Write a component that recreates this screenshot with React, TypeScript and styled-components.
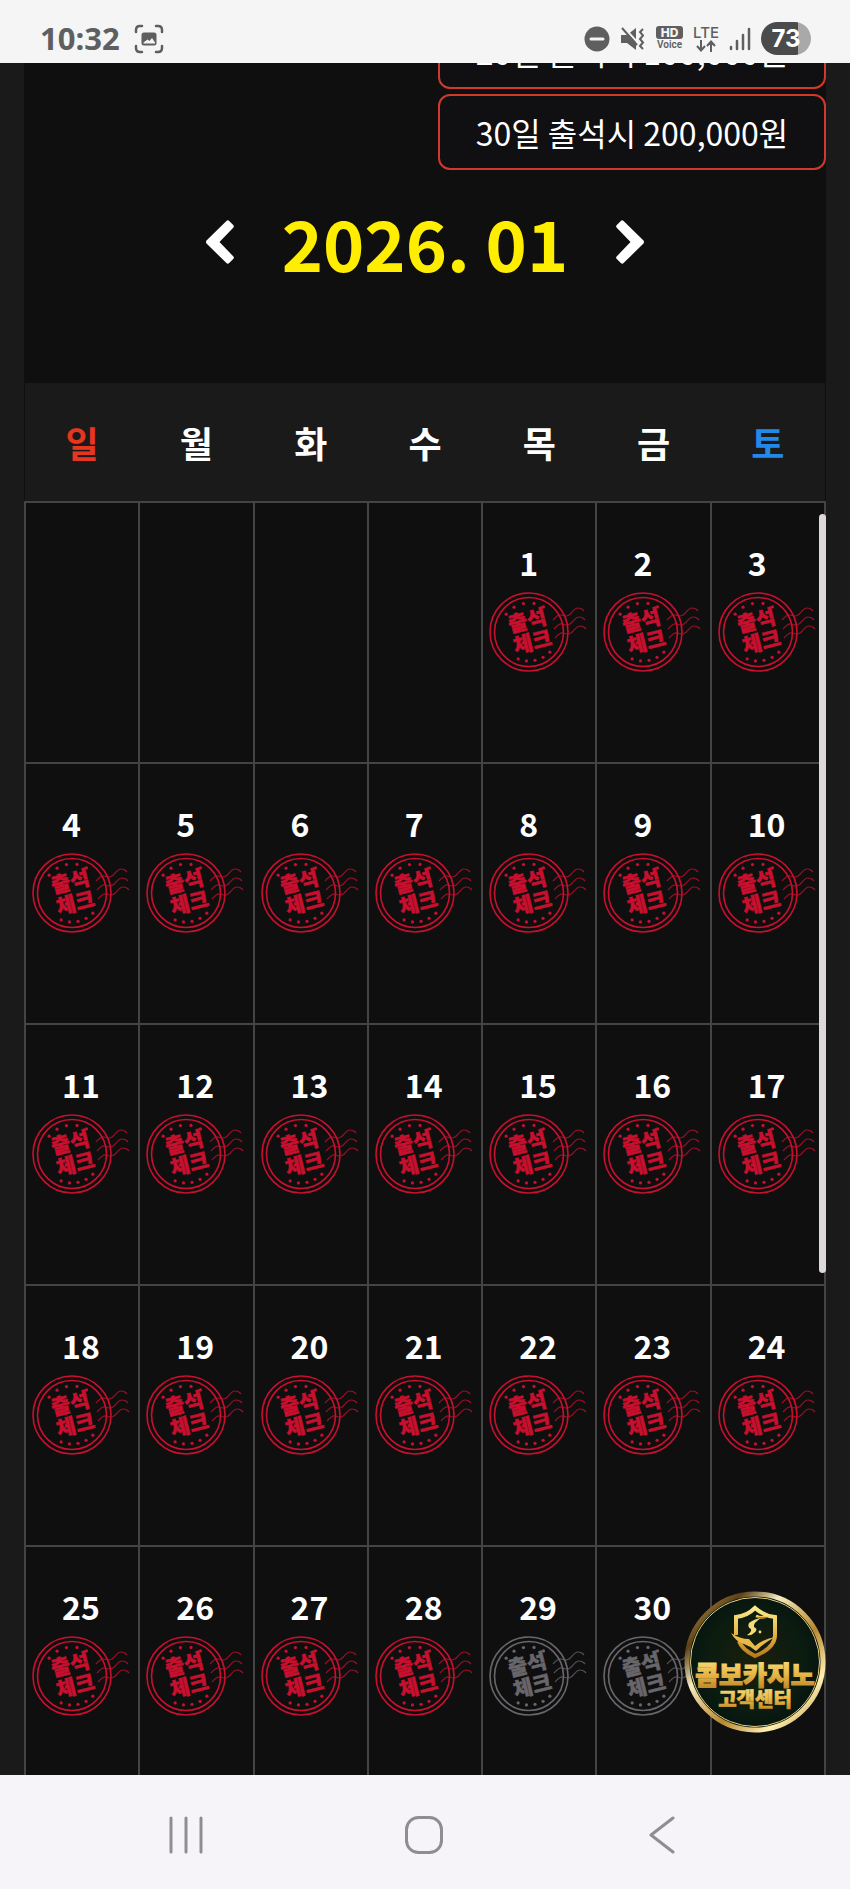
import React from "react";
import styled, { createGlobalStyle } from "styled-components";

const GlobalStyle = createGlobalStyle`
  *, *::before, *::after { box-sizing: border-box; }
  html, body { margin: 0; background: #1b1a1b; }
  body { font-family: "Noto Sans CJK KR", "Noto Sans", sans-serif; }
  button { border: 0; padding: 0; background: none; color: inherit; font: inherit; cursor: pointer; }
`;

const Phone = styled.div`
  display: flex;
  flex-direction: column;
  height: 100vh;
  overflow: hidden;
`;

const StatusBar = styled.header`
  position: relative;
  z-index: 2;
  flex: none;
  display: flex;
  align-items: center;
  justify-content: space-between;
  height: 63px;
  padding: 14px 39px 0 40px;
  background: #f5f5f5;
  color: #5f5f5f;
`;

const StatusGroup = styled.div<{ $gap: number }>`
  display: flex;
  align-items: center;
  gap: ${(p) => p.$gap}px;
`;

const Clock = styled.time`
  padding-bottom: 2px;
  font: 700 31px/32px "Open Sans", "Noto Sans", sans-serif;
`;

const StackedLabel = styled.span`
  display: flex;
  flex-direction: column;
  align-items: center;
  font: 600 10px/12px Roboto, sans-serif;
`;

const HdTag = styled.span`
  width: 27px;
  border-radius: 3px;
  background: #5f5f5f;
  color: #f5f5f5;
  font: 800 12px/13px Inter, sans-serif;
  text-align: center;
`;

const LteText = styled.span`
  font: 500 15px/14px Inter, sans-serif;
`;

const Battery = styled.span`
  width: 50px;
  height: 33px;
  border-radius: 17px;
  background: linear-gradient(90deg, #4b4b4b 73%, #a9a9a9 73%);
  color: #fff;
  font: 700 24px/33px Inter, sans-serif;
  text-align: center;
`;

const Screen = styled.main`
  position: relative;
  flex: 1;
  min-height: 0;
  overflow: hidden;
  padding: 0 24px;
`;

const Sheet = styled.div`
  min-height: 100%;
  background: #100f10;
`;

const Rewards = styled.ul`
  display: flex;
  flex-direction: column;
  align-items: flex-end;
  gap: 5px;
  margin: -50px 0 0;
  padding: 0;
  list-style: none;
`;

const Reward = styled.li`
  width: 388px;
  height: 76px;
  border: 2px solid #d03a2d;
  border-radius: 12px;
  background: #101012;
  color: #fff;
  font-size: 32px;
  line-height: 72px;
  text-align: center;
`;

const MonthNav = styled.nav`
  display: flex;
  align-items: center;
  justify-content: center;
  gap: 48px;
  height: 213px;
  padding-bottom: 70px;
`;

const MonthTitle = styled.h1`
  margin: 0;
  color: #fe0;
  font-size: 70px;
  font-weight: 700;
  line-height: 80px;
`;

const ArrowButton = styled.button`
  display: flex;
  color: #fff;
`;

const Calendar = styled.table`
  width: 100%;
  table-layout: fixed;
  border-collapse: collapse;
`;

const DayName = styled.th<{ $color: string }>`
  height: 119px;
  padding: 0;
  background: #1b1a1b;
  color: ${(p) => p.$color};
  font-size: 36px;
  font-weight: 700;
  line-height: 48px;
`;

const DayCell = styled.td`
  height: 261px;
  padding: 35px 0 0 6px;
  border: 2px solid #454445;
  color: #fff;
  vertical-align: top;
`;

const DayNumber = styled.div`
  padding-left: 30px;
  font-size: 32px;
  font-weight: 700;
  line-height: 48px;
`;

const StampArt = styled.svg<{ $missed: boolean }>`
  display: block;
  margin-top: 5px;
  color: ${(p) => (p.$missed ? "#69666b" : "#c8102e")};
`;

const ScrollThumb = styled.div`
  position: absolute;
  top: 451px;
  right: 24px;
  width: 7px;
  height: 759px;
  border-radius: 4px;
  background: #ddd8dc;
`;

const SupportButton = styled.button`
  position: absolute;
  right: 24px;
  bottom: 42px;
  width: 142px;
  height: 142px;
  border-radius: 50%;
`;

const SystemNav = styled.nav`
  flex: none;
  display: grid;
  grid-template-columns: repeat(3, 1fr);
  align-items: center;
  justify-items: center;
  height: 114px;
  padding: 6px 69px 0 67px;
  background: #f6f4f8;
  color: #8f8d92;
`;

const SystemButton = styled.button`
  display: flex;
`;

const weekdays = [
  { name: "일", color: "#e8351f" },
  { name: "월", color: "#fff" },
  { name: "화", color: "#fff" },
  { name: "수", color: "#fff" },
  { name: "목", color: "#fff" },
  { name: "금", color: "#fff" },
  { name: "토", color: "#2389e8" },
];

const FIRST_WEEKDAY = 4;
const DAYS_IN_MONTH = 31;
const LAST_ATTENDED = 28;

const weeks = Array.from({ length: 5 }, (_, w) =>
  Array.from({ length: 7 }, (_, d) => {
    const day = w * 7 + d - FIRST_WEEKDAY + 1;
    return day >= 1 && day <= DAYS_IN_MONTH ? day : null;
  })
);

const stars = [-142, -121, -101, -80, -60, 112, 95, 78, 61, 44];

const wave = "c3-3 5-6 8-5s5 2 8 0 5-7 9-7 4 1 6 3";

function Stamp({ missed }: { missed: boolean }) {
  return (
    <StampArt $missed={missed} width="98" height="82" viewBox="0 0 98 82" aria-hidden="true">
      <g fill="none" stroke="currentColor">
        <circle cx="40" cy="41" r="39" strokeWidth="1.6" />
        <circle cx="40" cy="41" r="34.5" strokeWidth="1.6" />
        <path d={`M64 29${wave}M65 38${wave}M66 47${wave}`} strokeWidth="1.2" opacity="0.75" />
      </g>
      {stars.map((a) => {
        const r = (a * Math.PI) / 180;
        return <circle key={a} cx={40 + 29 * Math.cos(r)} cy={41 + 29 * Math.sin(r)} r="1.6" fill="currentColor" />;
      })}
      <g
        transform="rotate(-14 40 41)"
        fill="currentColor"
        stroke="currentColor"
        strokeWidth="0.4"
        fontSize="21"
        fontWeight="900"
        textAnchor="middle"
      >
        <text x="41" y="37">출석</text>
        <text x="41" y="59">체크</text>
      </g>
    </StampArt>
  );
}

function Chevron({ flip }: { flip?: boolean }) {
  return (
    <svg width="28" height="44" viewBox="0 0 28 44" fill="currentColor" aria-hidden="true">
      <path
        transform={flip ? "rotate(180 14 22)" : undefined}
        d="M.5 20.600 20.400.900q1.400-1.400 2.800 0l4 4q1.400 1.400 0 2.800L13.500 22l13.700 14.300q1.400 1.400 0 2.800l-4 4q-1.400 1.400-2.800 0L.5 23.400q-1-1.400 0-2.800z"
      />
    </svg>
  );
}

function SupportLogo() {
  return (
    <svg width="142" height="142" viewBox="0 0 142 142" role="img" aria-label="콤보카지노 고객센터">
      <defs>
        <linearGradient id="ring" x1="0" y1="0" x2="1" y2="1">
          <stop offset="0" stopColor="#c9a24c" />
          <stop offset="0.2" stopColor="#5c4118" />
          <stop offset="0.35" stopColor="#f6ecc0" />
          <stop offset="0.6" stopColor="#b8862e" />
          <stop offset="0.8" stopColor="#fff0b0" />
          <stop offset="1" stopColor="#a87a28" />
        </linearGradient>
        <linearGradient id="gold" x1="0" y1="0" x2="0" y2="1">
          <stop offset="0" stopColor="#fbe98c" />
          <stop offset="0.5" stopColor="#e9b949" />
          <stop offset="1" stopColor="#b97b20" />
        </linearGradient>
        <radialGradient id="felt">
          <stop offset="0" stopColor="#1b1f0c" />
          <stop offset="0.7" stopColor="#0b1c10" />
          <stop offset="1" stopColor="#06150f" />
        </radialGradient>
      </defs>
      <circle cx="71" cy="71" r="68" fill="url(#felt)" stroke="url(#ring)" strokeWidth="5" />
      <circle cx="71" cy="71" r="64.500" fill="none" stroke="#e8cf7c" strokeWidth="1" />
      <g fill="none" stroke="url(#gold)" strokeWidth="4" strokeLinejoin="miter">
        <path d="M52 44V26q11-1 19-9 9 8 20 9v18c0 10-10 17-20 21-8-4-14-9-16-15" />
        <path d="M72 25q6 3 11 0" strokeWidth="3" />
      </g>
      <path d="M47 42q9 6 18 6l6 7q8-7 20-9-11 6-19 14-6-5-12-7-8-2-13-11z" fill="#e9b949" />
      <path d="M65 32q5-4 12-5-8 5-7 9 5 2 0 6-3 3-7 2 5-3 4-6-4-2-2-6z" fill="#f6dc78" />
      <circle cx="76" cy="41" r="1.400" fill="#f6dc78" />
      <g fill="url(#gold)" stroke="url(#gold)" fontWeight="900" textAnchor="middle">
        <text x="71" y="94" fontSize="26" strokeWidth="1.200">콤보카지노</text>
        <text x="71" y="116" fontSize="20" strokeWidth="0.600">고객센터</text>
      </g>
    </svg>
  );
}

export default function App() {
  return (
    <Phone>
      <GlobalStyle />
      <StatusBar>
        <StatusGroup $gap={14}>
          <Clock>10:32</Clock>
          <svg width="30" height="30" viewBox="0 0 30 30" fill="none" stroke="currentColor" strokeWidth="2.500" strokeLinecap="round" aria-hidden="true">
            <path d="M2 8V6q0-4 4-4h2M22 2h2q4 0 4 4v2M28 22v2q0 4-4 4h-2M8 28H6q-4 0-4-4v-2" />
            <rect x="7.500" y="8.500" width="15" height="13" rx="2.500" fill="currentColor" stroke="none" />
            <path d="M9.500 19.500v-1l4-3 2 1.500 2.500-3 3 4.500v1z" fill="#f5f5f5" stroke="none" />
          </svg>
        </StatusGroup>
        <StatusGroup $gap={10}>
          <svg width="26" height="26" viewBox="0 0 26 26" aria-hidden="true">
            <circle cx="13" cy="13" r="12.500" fill="currentColor" />
            <path d="M7 13h12" stroke="#f5f5f5" strokeWidth="3" strokeLinecap="round" />
          </svg>
          <svg width="26" height="24" viewBox="0 0 26 24" aria-hidden="true">
            <path d="M1 8h6l9-7v22l-9-7H1z" fill="currentColor" />
            <path d="m4 .500 14 15.500" stroke="#f5f5f5" strokeWidth="2" />
            <path d="m2 1 15 17" stroke="currentColor" strokeWidth="2" />
            <path d="m23 2-3 3 3 3.500-3 3.500 3 3.500-3 3.500 3 3" fill="none" stroke="currentColor" strokeWidth="2" />
          </svg>
          <StackedLabel>
            <HdTag>HD</HdTag>
            Voice
          </StackedLabel>
          <StackedLabel>
            <LteText>LTE</LteText>
            <svg width="20" height="12" viewBox="0 0 20 12" fill="none" stroke="currentColor" strokeWidth="2" aria-hidden="true">
              <path d="M5 0v10M1 6l4 4.500L9 6M15 12V2M11 6l4-4.500L19 6" />
            </svg>
          </StackedLabel>
          <svg width="22" height="24" viewBox="0 0 22 24" stroke="currentColor" strokeWidth="2.500" strokeLinecap="round" aria-hidden="true">
            <path d="M2 20v2M8 14v8M14 8v14M20 2v20" />
          </svg>
          <Battery>73</Battery>
        </StatusGroup>
      </StatusBar>
      <Screen>
        <Sheet>
          <Rewards>
            <Reward>20일 출석시 100,000원</Reward>
            <Reward>30일 출석시 200,000원</Reward>
          </Rewards>
          <MonthNav aria-label="월 이동">
            <ArrowButton aria-label="이전 달"><Chevron /></ArrowButton>
            <MonthTitle>2026. 01</MonthTitle>
            <ArrowButton aria-label="다음 달"><Chevron flip /></ArrowButton>
          </MonthNav>
          <Calendar>
            <thead>
              <tr>
                {weekdays.map((d) => (
                  <DayName key={d.name} $color={d.color} scope="col">{d.name}</DayName>
                ))}
              </tr>
            </thead>
            <tbody>
              {weeks.map((week, w) => (
                <tr key={w}>
                  {week.map((day, d) => (
                    <DayCell key={d}>
                      {day && (
                        <>
                          <DayNumber>{day}</DayNumber>
                          <Stamp missed={day > LAST_ATTENDED} />
                        </>
                      )}
                    </DayCell>
                  ))}
                </tr>
              ))}
            </tbody>
          </Calendar>
        </Sheet>
        <ScrollThumb />
        <SupportButton><SupportLogo /></SupportButton>
      </Screen>
      <SystemNav aria-label="시스템">
        <SystemButton aria-label="최근 앱">
          <svg width="36" height="38" viewBox="0 0 36 38" stroke="currentColor" strokeWidth="3" strokeLinecap="round" aria-hidden="true">
            <path d="M3 2v34M18 2v34M33 2v34" />
          </svg>
        </SystemButton>
        <SystemButton aria-label="홈">
          <svg width="38" height="38" viewBox="0 0 38 38" fill="none" stroke="currentColor" strokeWidth="3" aria-hidden="true">
            <rect x="1.500" y="1.500" width="35" height="35" rx="12" />
          </svg>
        </SystemButton>
        <SystemButton aria-label="뒤로">
          <svg width="26" height="38" viewBox="0 0 26 38" fill="none" stroke="currentColor" strokeWidth="3" strokeLinecap="round" strokeLinejoin="round" aria-hidden="true">
            <path d="M24 2 2 19l22 17" />
          </svg>
        </SystemButton>
      </SystemNav>
    </Phone>
  );
}
